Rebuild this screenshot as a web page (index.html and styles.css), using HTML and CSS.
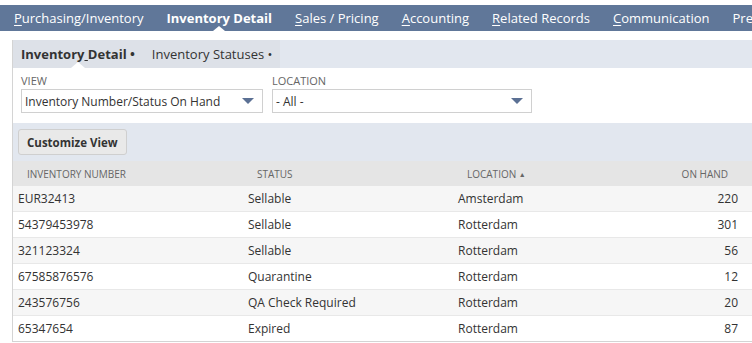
FILE: index.html
```html
<!DOCTYPE html>
<html>
<head>
<meta charset="utf-8">
<link rel="stylesheet" href="styles.css">
</head>
<body>
<nav class="topnav">
  <a class="nav-item"><u>P</u>urchasing/Inventory</a>
  <a class="nav-item active">Inventory Detail</a>
  <a class="nav-item"><u>S</u>ales / Pricing</a>
  <a class="nav-item"><u>A</u>ccounting</a>
  <a class="nav-item"><u>R</u>elated Records</a>
  <a class="nav-item"><u>C</u>ommunication</a>
  <a class="nav-item">Pre<u>f</u>erences</a>
</nav>
<section class="panel">
  <div class="subtabs">
    <div class="tabs">
      <span class="tab active">Inventory<u> </u>Detail •</span>
      <span class="tab">Inventory Statuses •</span>
    </div>
  </div>
  <div class="filters">
    <div class="field view-field">
      <label class="field-label">VIEW</label>
      <div class="select"><span>Inventory Number/Status On Hand</span><i class="caret"></i></div>
    </div>
    <div class="field loc-field">
      <label class="field-label">LOCATION</label>
      <div class="select"><span>- All -</span><i class="caret"></i></div>
    </div>
  </div>
  <div class="toolbar">
    <button class="btn">Customize View</button>
  </div>
  <table class="grid">
    <thead>
      <tr>
        <th class="c1">INVENTORY NUMBER</th>
        <th class="c2">STATUS</th>
        <th class="c3">LOCATION <span class="sort">▲</span></th>
        <th class="c4 num">ON HAND</th>
      </tr>
    </thead>
    <tbody>
      <tr><td>EUR32413</td><td>Sellable</td><td>Amsterdam</td><td class="num">220</td></tr>
      <tr><td>54379453978</td><td>Sellable</td><td>Rotterdam</td><td class="num">301</td></tr>
      <tr><td>321123324</td><td>Sellable</td><td>Rotterdam</td><td class="num">56</td></tr>
      <tr><td>67585876576</td><td>Quarantine</td><td>Rotterdam</td><td class="num">12</td></tr>
      <tr><td>243576756</td><td>QA Check Required</td><td>Rotterdam</td><td class="num">20</td></tr>
      <tr><td>65347654</td><td>Expired</td><td>Rotterdam</td><td class="num">87</td></tr>
    </tbody>
  </table>
</section>
</body>
</html>
```

FILE: styles.css
```css
html, body {
  margin: 0;
  padding: 0;
  background: #ffffff;
  overflow: hidden;
  width: 752px;
  height: 343px;
}
body {
  font-family: "Open Sans", "Liberation Sans", sans-serif;
  color: #333333;
}
.topnav {
  margin-top: 5px;
  height: 26px;
  background: #607799;
  display: flex;
  align-items: center;
  gap: 23px;
  padding-left: 14px;
  white-space: nowrap;
  overflow: hidden;
}
.nav-item {
  position: relative;
  color: #ffffff;
  font-size: 13px;
  line-height: 26px;
  text-decoration: none;
  flex: none;
}
.nav-item u { text-decoration: underline; text-underline-offset: 2px; }
.nav-item.active { font-weight: 700; }
.nav-item.active::after {
  content: "";
  position: absolute;
  left: 50%;
  bottom: 0;
  margin-left: -6px;
  border-left: 6px solid transparent;
  border-right: 6px solid transparent;
  border-bottom: 5px solid #ffffff;
}
.panel {
  margin: 9px 0 0 12px;
  width: 740px;
  border-left: 1px solid #d4d4d4;
  border-bottom: 1px solid #d4d4d4;
}
.subtabs {
  height: 28px;
  background: #e2e7ef;
  display: flex;
}
.tabs {
  display: flex;
  align-items: center;
  background: #dde1e8;
  width: 267px;
  padding-left: 8px;
  box-sizing: border-box;
}
.tab {
  position: relative;
  font-size: 13px;
  line-height: 28px;
  color: #333;
  margin-right: 17px;
  white-space: nowrap;
}
.tab.active { font-weight: 700; }
.tab.active::after {
  content: "";
  position: absolute;
  left: 50px;
  bottom: 0;
  border-left: 7px solid transparent;
  border-right: 7px solid transparent;
  border-bottom: 6px solid #ffffff;
}
.filters {
  background: #ffffff;
  height: 55px;
  display: flex;
  padding: 6px 0 0 8px;
  box-sizing: border-box;
  gap: 9px;
}
.field { display: flex; flex-direction: column; }
.field-label {
  font-size: 11px;
  line-height: 13px;
  color: #666666;
  margin-bottom: 2px;
}
.select {
  height: 24px;
  box-sizing: border-box;
  border: 1px solid #d0d0d0;
  display: flex;
  align-items: center;
  justify-content: space-between;
  padding: 0 8px 0 3px;
  font-size: 12px;
  color: #333;
}
.view-field .select { width: 242px; }
.loc-field .select { width: 260px; }
.caret {
  width: 0;
  height: 0;
  border-left: 6px solid transparent;
  border-right: 6px solid transparent;
  border-top: 6px solid #5b7094;
}
.toolbar {
  background: #e2e7ef;
  height: 38px;
  display: flex;
  align-items: center;
  padding-left: 5px;
}
.btn {
  font-family: inherit;
  font-size: 11.5px;
  font-weight: 700;
  color: #333;
  background: #e9e9e9;
  border: 1px solid #cfcfcf;
  border-radius: 3px;
  height: 26px;
  padding: 0 8px;
}
.grid {
  width: 100%;
  border-collapse: collapse;
  table-layout: fixed;
}
.grid th, .grid td { white-space: nowrap; }
.grid th {
  box-sizing: border-box;
  background: #e5e5e5;
  color: #666666;
  font-size: 10px;
  font-weight: 400;
  text-align: left;
  height: 25px;
  padding: 0 0 0 14px;
}
.grid th.num { text-align: right; padding-right: 25px; }
.grid .c1 { width: 230px; }
.grid .c2 { width: 210px; }
.grid .c3 { width: 190px; }
.sort { font-size: 7px; vertical-align: 1px; }
.grid td {
  font-size: 12px;
  line-height: 16px;
  color: #333;
  height: 25px;
  padding: 0 0 0 5px;
  border-bottom: 1px solid #e8e8e8;
}
.grid td.num { text-align: right; padding-right: 15px; }
.grid tbody tr:nth-child(odd) td { background: #f6f6f6; }
.grid tbody tr:last-child td { border-bottom: none; }
```
